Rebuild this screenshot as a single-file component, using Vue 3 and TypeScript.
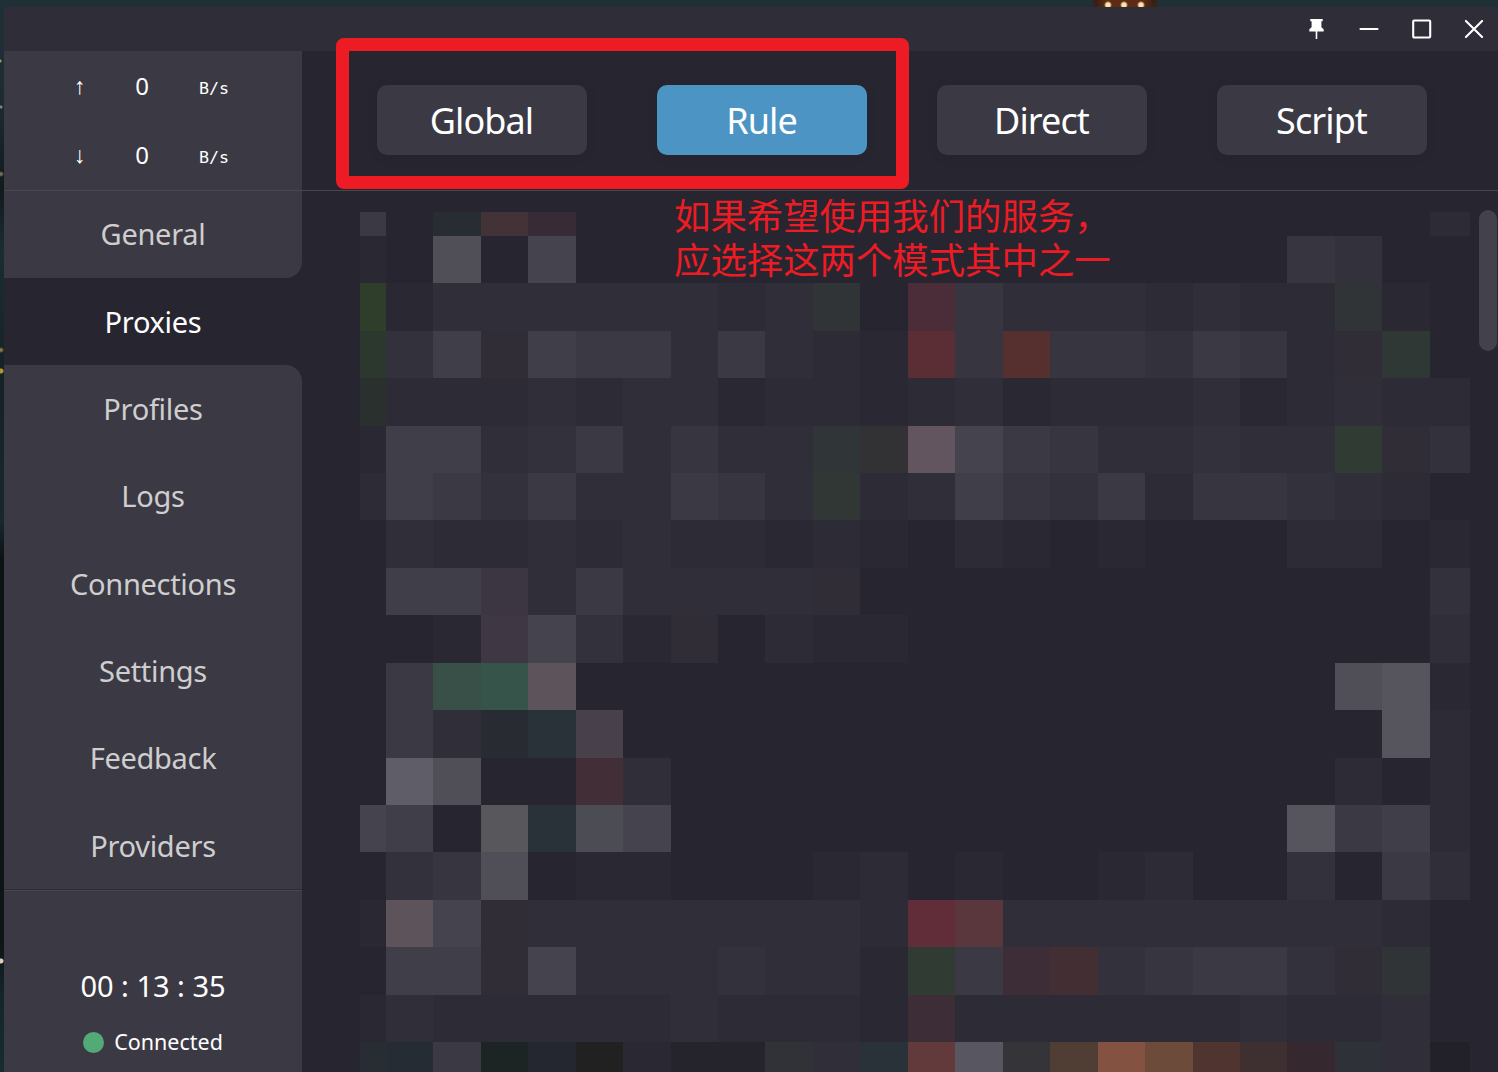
<script setup lang="ts">
interface Rate {
  arrow: string
  value: number
  unit: string
}

const rates: Rate[] = [
  { arrow: '↑', value: 0, unit: 'B/s' },
  { arrow: '↓', value: 0, unit: 'B/s' },
]

const pages: string[] = ['General', 'Proxies', 'Profiles', 'Logs', 'Connections', 'Settings', 'Feedback', 'Providers']
const modes: string[] = ['Global', 'Rule', 'Direct', 'Script']
const noteLines: string[] = ['如果希望使用我们的服务，', '应选择这两个模式其中之一']
const activePage = 1
const activeMode = 'Rule'

// One letter per tile of the censored proxy list.
const palette: Record<string, string> = {
  '.': '#272530', a: '#2a2833', b: '#2d2b36', c: '#302e39', d: '#33313c', e: '#373540',
  f: '#3b3943', g: '#403e48', h: '#45434d', i: '#504e57', j: '#56545d', k: '#5f5d67',
  T: '#282c33', R: '#433236', P: '#372c36', G: '#2e3e2b', U: '#303437', V: '#4b2c39',
  W: '#2c382d', X: '#302d36', Y: '#5b2d35', Z: '#56302f', Q: '#2f3834', O: '#29302e',
  L: '#303537', M: '#323235', N: '#63555f', K: '#303b33', J: '#313734', I: '#3c3542',
  H: '#3f3744', S: '#385048', s: '#37544b', n: '#5d535b', t: '#292b32', u: '#293139',
  m: '#48414c', v: '#422e36', w: '#58575b', x: '#4c4c54', y: '#612d38', z: '#59373c',
  A: '#3c2d36', B: '#432e34', C: '#252c33', D: '#1c2424', E: '#24272f', F: '#212122',
  o: '#25242d', l: '#303237', '3': '#633a3b', '4': '#585660', '5': '#353438', '6': '#503d33',
  '7': '#835240', '8': '#6c4b3b', '9': '#50342f', '0': '#3e3030', q: '#35282f', r: '#2f3138',
  p: '#22212a',
}

const tileRows: string[] = [
  'f.TRP..................b',
  'a.i.h...............ed..',
  'GaccccccbcU.VecccbcbbUa.',
  'WdgXgffcfcbaYeZeedfebXQ.',
  'Obbbcbccabbabcabbbcabcbb',
  'aggcdfceccLMNhfeccdccKXd',
  'bgfdfccfecJbcgedfbeedcb.',
  '.cbbcbcbbaba.ba.a...bb.a',
  '.ggIcfccccX............d',
  '..aHhdaX.baa...........c',
  '.fSsn................ija',
  '.fctum................jb',
  '.ki..vc..............b.b',
  'hg.wuxh.............jfgb',
  '.dei.aa...ab.a..ab..d.fc',
  'anhXcccccccbyzccccccccb.',
  '.ggXhcccdccaKfABdeffdXU.',
  'acbbbbbcbbbaAbbbbbbcbbc.',
  'TCfDEFaoolcu34567890qrcp',
]

const tiles: string[] = tileRows.flatMap((row) => [...row].map((k) => palette[k]))
</script>

<template>
  <div class="desktop">
    <i class="lantern"></i>
    <div class="window">
      <header class="titlebar">
        <svg class="ctl" viewBox="0 0 22 22"><path d="M4.300 1h12.400v2.200h-1.300v6l2.300 2v2.200H3.300v-2.200l2.300-2v-6H4.300zM9.700 13.400h1.600V21H9.700z" fill="#fff" /></svg>
        <svg class="ctl" viewBox="0 0 22 22"><path d="M2.500 11h17" /></svg>
        <svg class="ctl" viewBox="0 0 22 22"><rect x="2.200" y="2.500" width="17" height="17" rx="1" /></svg>
        <svg class="ctl" viewBox="0 0 22 22"><path d="M2.900 2.900l16.200 16.200M19.100 2.900L2.900 19.100" /></svg>
      </header>
      <div class="body">
        <aside class="sidebar">
          <div class="rates">
            <div v-for="r in rates" :key="r.arrow" class="rate">
              <span class="arrow">{{ r.arrow }}</span>
              <span class="value">{{ r.value }}</span>
              <span class="unit">{{ r.unit }}</span>
            </div>
          </div>
          <nav class="nav">
            <div
              v-for="(p, i) in pages"
              :key="p"
              class="item"
              :class="{ active: i === activePage, before: i === activePage - 1, after: i === activePage + 1 }"
            >
              <span class="label">{{ p }}</span>
            </div>
          </nav>
          <div class="status">
            <div class="clock">00 : 13 : 35</div>
            <div class="conn"><i class="dot"></i><span>Connected</span></div>
          </div>
        </aside>
        <main class="main">
          <div class="modes">
            <button v-for="m in modes" :key="m" class="mode" :class="{ on: m === activeMode }">{{ m }}</button>
          </div>
          <div class="list">
            <div class="mosaic">
              <i v-for="(c, i) in tiles" :key="i" :style="{ background: c }"></i>
            </div>
            <div class="scroll"></div>
          </div>
        </main>
      </div>
    </div>
    <div class="frame"></div>
    <div class="note">
      <div v-for="line in noteLines" :key="line">{{ line }}</div>
    </div>
  </div>
</template>

<style>
body {
  overflow: hidden;
  background: #272530;
}
</style>

<style scoped>
.desktop {
  position: relative;
  box-sizing: border-box;
  width: 1498px;
  height: 1072px;
  padding: 7px 0 0 4px;
  overflow: hidden;
  color: #fff;
  font-family: 'Noto Sans', 'Noto Sans CJK SC', sans-serif;
  background:
    radial-gradient(circle at 0 61px, #b59a63 0 1px, transparent 2px),
    radial-gradient(circle at 1px 107px, #7d8582 0 1px, transparent 2px),
    radial-gradient(circle at 1px 174px, #77715f 0 1px, transparent 3px),
    radial-gradient(circle at 1px 350px, #8a7a3c 0 1px, transparent 3px),
    radial-gradient(circle at 1px 371px, #b8922f 0 2px, transparent 3px),
    radial-gradient(circle at 1px 961px, #e0cbbf 0 2px, transparent 3px),
    linear-gradient(#1f3036 0, #1d2c32 100px, #111a1d 190px, #1b2d32 250px, #152226 380px, #17282d 520px, #0c1213 560px, #0d1516 940px, #14262c 1000px, #172b30 1072px);
}
.lantern {
  position: absolute;
  left: 1091px;
  top: 0;
  width: 68px;
  height: 7px;
  background:
    radial-gradient(circle at 17px 5px, #ffe3b0 0 2px, transparent 4px),
    radial-gradient(circle at 33px 5px, #ffe3b0 0 2px, transparent 4px),
    radial-gradient(circle at 50px 5px, #ffe3b0 0 2px, transparent 4px),
    linear-gradient(90deg, transparent, #3a1e12 5px, #5e2c12 15px, #5e2c12 52px, #3a1e12 63px, transparent);
}
.window {
  display: flex;
  flex-direction: column;
  height: 1065px;
  background: #272530;
}
.titlebar {
  display: flex;
  justify-content: flex-end;
  align-items: center;
  gap: 30.500px;
  flex: none;
  height: 44px;
  padding-right: 13px;
  box-sizing: border-box;
  background: #2e2d38;
}
.ctl {
  width: 22px;
  height: 22px;
  fill: none;
  stroke: #fff;
  stroke-width: 2.100;
  stroke-linecap: round;
}
.ctl:first-child {
  stroke: none;
}
.body {
  display: flex;
  flex: 1;
  min-height: 0;
}
.sidebar {
  display: flex;
  flex-direction: column;
  width: 298px;
  flex: none;
  background: #272530;
}
.rates {
  flex: none;
  height: 140px;
  box-sizing: border-box;
  border-bottom: 1px solid #48474a;
  background: #3b3a44;
}
.rate {
  display: flex;
  align-items: center;
  height: 69px;
  padding-left: 61px;
}
.arrow {
  width: 30px;
  text-align: center;
  font: 23px/26px 'Liberation Mono', monospace;
  padding-top: 4px;
}
.value {
  width: 30px;
  margin-left: 32px;
  padding-bottom: 1px;
  text-align: center;
  font-size: 24px;
}
.unit {
  margin-left: 42px;
  padding-top: 4px;
  font: 16.700px 'DejaVu Sans Mono', monospace;
}
.nav {
  display: flex;
  flex-direction: column;
  flex: none;
  height: 698px;
}
.item {
  display: flex;
  flex: 1;
  align-items: center;
  justify-content: center;
  background: #3b3a44;
  color: #cfcecf;
  font-size: 29px;
  letter-spacing: -0.300px;
}
.item.active {
  flex: none;
  height: 87px;
  background: #272530;
  color: #fff;
}
.item.before {
  flex: none;
  height: 87px;
  border-bottom-right-radius: 16px;
}
.item.before .label {
  padding-bottom: 2px;
}
.item.after {
  border-top-right-radius: 16px;
}
.status {
  flex: 1;
  border-top: 1px solid #2d2c35;
  box-shadow: inset 0 1px #48474b;
  background: #3b3a44;
  text-align: center;
}
.clock {
  margin-top: 76px;
  font-size: 29px;
  line-height: 40px;
}
.conn {
  display: flex;
  align-items: center;
  justify-content: center;
  gap: 10px;
  margin-top: 21px;
  font-size: 21.500px;
  line-height: 30px;
}
.dot {
  width: 21px;
  height: 21px;
  border-radius: 50%;
  background: #52aa76;
}
.main {
  display: flex;
  flex-direction: column;
  flex: 1;
  min-width: 0;
}
.modes {
  display: flex;
  gap: 70px;
  flex: none;
  height: 140px;
  box-sizing: border-box;
  padding: 34px 0 0 75px;
  border-bottom: 1px solid #48474a;
}
.mode {
  width: 210px;
  height: 70px;
  padding: 0 1px 0 0;
  border: 0;
  border-radius: 10px;
  background: #3b3a44;
  color: #fff;
  font: 36px 'Noto Sans', sans-serif;
  letter-spacing: -0.900px;
  box-shadow: 0 2px 12px rgba(20, 18, 26, 0.080);
}
.mode.on {
  background: #4b94c4;
}
.list {
  display: flex;
  flex: 1;
  min-height: 0;
  padding-left: 58px;
}
.mosaic {
  display: grid;
  margin-top: 21px;
  grid-template-columns: 26px 47px 48px 47px 48px 47px 48px 47px 47px 48px 47px 48px 47px 48px 47px 48px 47px 48px 47px 47px 48px 47px 48px 40px;
  grid-template-rows: 24px 47px 48px 47px 48px 47px 47px 48px 47px 48px 47px 48px 47px 47px 48px 47px 48px 47px 30px;
}
.scroll {
  width: 18px;
  height: 141px;
  margin: 19px 0 0 9px;
  border-radius: 9px;
  background: #43424c;
}
.frame {
  position: absolute;
  left: 336px;
  top: 38px;
  width: 573px;
  height: 151px;
  box-sizing: border-box;
  border: 13.500px solid #ed1c24;
  border-radius: 8px;
}
.note {
  position: absolute;
  left: 674px;
  top: 193px;
  color: #ed1c24;
  font: 400 36.400px/43.500px 'Noto Sans CJK SC', sans-serif;
  white-space: nowrap;
}
</style>
